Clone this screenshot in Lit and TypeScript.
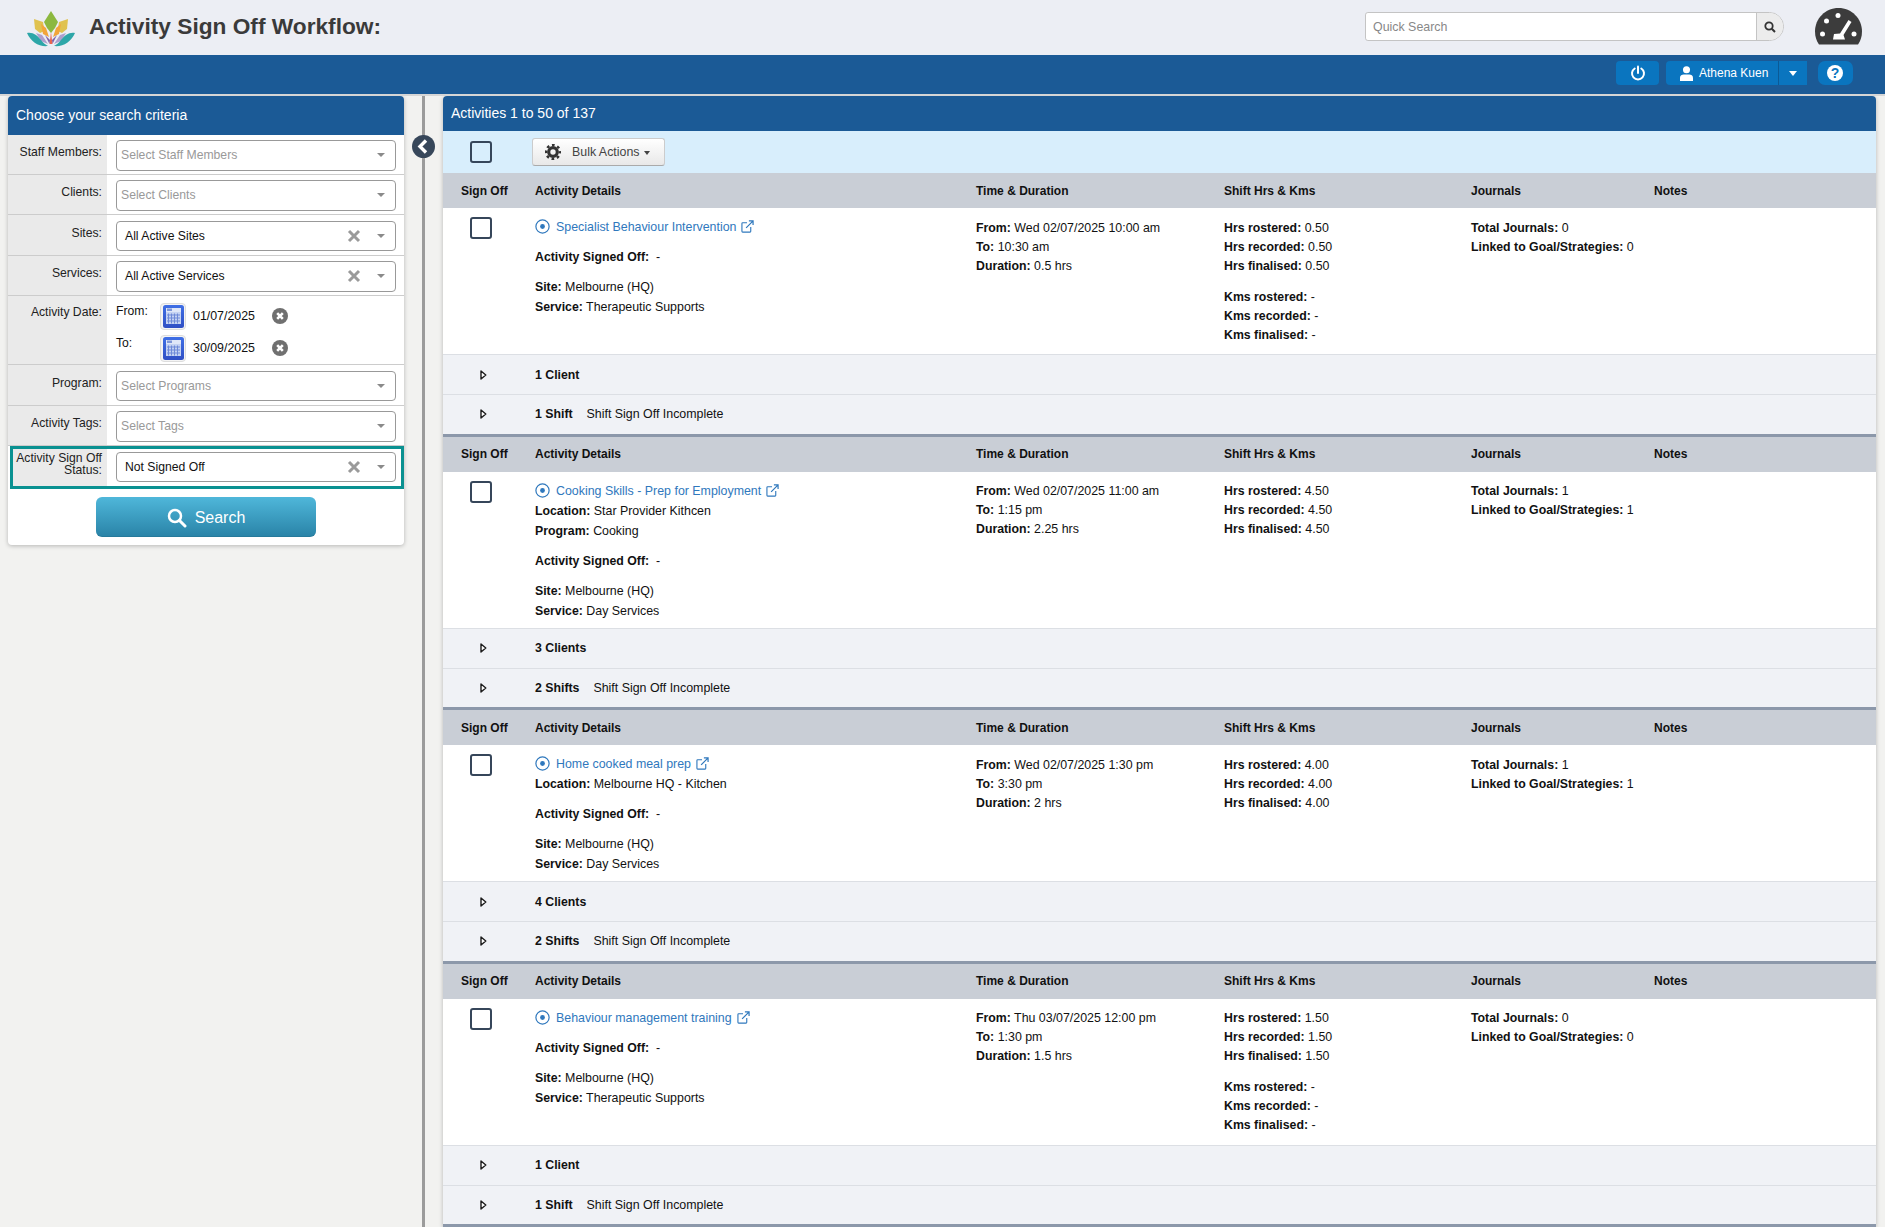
import { LitElement, html, css } from "lit";
import { customElement } from "lit/decorators.js";

const caret = html`<i class="caret"></i>`;
const cross = html`<svg class="x" viewBox="0 0 14 14"><path d="M2 2 12 12M12 2 2 12" stroke="#9a9a9a" stroke-width="3" fill="none"/></svg>`;

const calendar = html`<span class="cal"><svg viewBox="0 0 21 23" width="21" height="23">
  <defs><linearGradient id="cg" x1="0" y1="0" x2="0" y2="1"><stop offset="0" stop-color="#3f6fe6"/><stop offset="1" stop-color="#2f4fc4"/></linearGradient></defs>
  <rect x="0" y="0" width="21" height="23" rx="2.5" fill="url(#cg)"/>
  <rect x="3" y="3" width="15" height="16" fill="#c4d2f2"/>
  <rect x="3" y="3" width="15" height="4" fill="#dfe7f8"/>
  <path d="M4 3.5h5v2.5H4z" fill="#7f97d8"/>
  <path d="M5.5 8.5v10M8.5 8.5v10M11.5 8.5v10M14.5 8.5v10M4 10h13M4 13h13M4 16h13" stroke="#6f8ad8" stroke-width="1" fill="none"/>
</svg></span>`;

const clearBtn = html`<svg class="clr" viewBox="0 0 16 16"><circle cx="8" cy="8" r="8" fill="#707070"/><path d="M5.2 5.2 10.8 10.8M10.8 5.2 5.2 10.8" stroke="#fff" stroke-width="2.6" fill="none"/></svg>`;

const target = html`<svg class="tgt" viewBox="0 0 15 15"><circle cx="7.5" cy="7.5" r="6.6" fill="none" stroke="#2f78bd" stroke-width="1.2"/><circle cx="7.5" cy="7.5" r="2.4" fill="#2f78bd"/></svg>`;
const ext = html`<svg class="ext" viewBox="0 0 14 14"><path d="M10.5 7.5V12.2a.8.8 0 0 1-.8.8H1.8a.8.8 0 0 1-.8-.8V3.8a.8.8 0 0 1 .8-.8H6.5" fill="none" stroke="#2f78bd" stroke-width="1.2"/><path d="M5.5 8.5 12.5 1.5M8.5 1h4.5v4.5" fill="none" stroke="#2f78bd" stroke-width="1.3"/></svg>`;
const arrow = html`<svg class="arr" viewBox="0 0 7 10"><path d="M1 1 5.8 5 1 9Z" fill="#fff" stroke="#1c1c1c" stroke-width="1.4" stroke-linejoin="round"/></svg>`;

const logo = html`<svg class="logo" viewBox="0 0 48 36" width="48" height="36">
  <path d="M24 0 31 11 28 17 24 22 20 17 17 11Z" fill="#8cb83f"/>
  <path d="M7 8 16 11 17.5 20 13 22 8 18Z" fill="#e0c24f"/>
  <path d="M41 8 32 11 30.5 20 35 22 40 18Z" fill="#e0c24f"/>
  <path d="M14 13 19 17 22 26 16 23Z" fill="#f2a53a"/>
  <path d="M34 13 29 17 26 26 32 23Z" fill="#f2a53a"/>
  <path d="M9 22 15 24 21 33 14 30Z" fill="#ae9fcd"/>
  <path d="M39 22 33 24 27 33 34 30Z" fill="#ae9fcd"/>
  <path d="M18 24 23 29 22.5 33Z" fill="#7d62ab"/>
  <path d="M30 24 25 29 25.5 33Z" fill="#7d62ab"/>
  <path d="M24 21 25.4 33H22.6Z" fill="#e8654f"/>
  <path d="M0 22C6 21 10 24 14 29 16 32 19 34 21 35 12 36 4 31 0 22Z" fill="#2da6a8"/>
  <path d="M48 22C42 21 38 24 34 29 32 32 29 34 27 35 36 36 44 31 48 22Z" fill="#2da6a8"/>
</svg>`;

const gauge = html`<svg class="gauge" viewBox="0 0 47 37" width="47" height="37">
  <path d="M4 36.5C1.5 33 0 28.5 0 23.5 0 10.5 10.5 0 23.5 0S47 10.5 47 23.5C47 28.5 45.5 33 43 36.5Z" fill="#3c3c3c"/>
  <circle cx="7.5" cy="26" r="2.5" fill="#fff"/><circle cx="11.5" cy="13" r="2.5" fill="#fff"/>
  <circle cx="23" cy="7.5" r="2.5" fill="#fff"/><circle cx="39" cy="26" r="2.5" fill="#fff"/>
  <path d="M33.5 12 36.5 14 28.5 27 30 31.5H18L19 26 25 25.5Z" fill="#fff"/>
</svg>`;

const gear = html`<svg class="gear" viewBox="0 0 16 16" width="16" height="16"><circle cx="8" cy="8" r="4.3" fill="none" stroke="#333" stroke-width="3.2"/><circle cx="8" cy="8" r="7" fill="none" stroke="#333" stroke-width="2.4" stroke-dasharray="2.7 2.8" stroke-dashoffset="1.3"/></svg>`;

type Block = {
  title: string;
  extra?: [string, string][];
  from: string; to: string; dur: string;
  hrs: [string, string, string];
  showKms: boolean;
  journals: string; linked: string;
  service: string;
  clients: string; shifts: string;
};

const blocks: Block[] = [
  { title: "Specialist Behaviour Intervention", from: "Wed 02/07/2025 10:00 am", to: "10:30 am", dur: "0.5 hrs",
    hrs: ["0.50", "0.50", "0.50"], showKms: true, journals: "0", linked: "0", service: "Therapeutic Supports", clients: "1 Client", shifts: "1 Shift" },
  { title: "Cooking Skills - Prep for Employment", extra: [["Location:", "Star Provider Kithcen"], ["Program:", "Cooking"]],
    from: "Wed 02/07/2025 11:00 am", to: "1:15 pm", dur: "2.25 hrs", hrs: ["4.50", "4.50", "4.50"], showKms: false, journals: "1", linked: "1",
    service: "Day Services", clients: "3 Clients", shifts: "2 Shifts" },
  { title: "Home cooked meal prep", extra: [["Location:", "Melbourne HQ - Kitchen"]], from: "Wed 02/07/2025 1:30 pm", to: "3:30 pm", dur: "2 hrs",
    hrs: ["4.00", "4.00", "4.00"], showKms: false, journals: "1", linked: "1", service: "Day Services", clients: "4 Clients", shifts: "2 Shifts" },
  { title: "Behaviour management training", from: "Thu 03/07/2025 12:00 pm", to: "1:30 pm", dur: "1.5 hrs",
    hrs: ["1.50", "1.50", "1.50"], showKms: true, journals: "0", linked: "0", service: "Therapeutic Supports", clients: "1 Client", shifts: "1 Shift" },
];

@customElement("app-root")
export class AppRoot extends LitElement {
  static styles = css`
    :host { display: block; height: 1227px; overflow: hidden; background: #f2f2f0; font-family: "Liberation Sans", Arial, sans-serif; font-size: 12.4px; color: #111; }
    * { box-sizing: border-box; }
    b { font-size: 12.3px; font-weight: 700; }
    .top { height: 55px; background: #eceef4; display: flex; align-items: center; position: relative; }
    .logo { margin: 2px 0 0 27px; }
    h1 { margin: 0 0 2px 14px; font-size: 22.7px; font-weight: 700; color: #3a3a3a; flex: 1; }
    .qs { width: 419px; height: 29px; display: flex; background: #fff; border: 1px solid #c4c4c4; border-radius: 3px 15px 15px 3px; margin-top: -2px; }
    .qs span { flex: 1; color: #888; font-size: 12.4px; padding: 7px 0 0 7px; }
    .qs div { width: 27px; background: #ececec; border-left: 1px solid #c4c4c4; border-radius: 0 15px 15px 0; display: flex; align-items: center; justify-content: center; }
    .gauge { margin: -2px 23px 0 31px; }
    .bar { height: 39px; background: #1b5a96; display: flex; justify-content: flex-end; align-items: flex-start; padding: 6px 32px 0 0; }
    .btn { height: 24px; background: #0a75bf; border-radius: 4px; color: #fff; display: flex; align-items: center; justify-content: center; }
    .pw { width: 43px; margin-right: 7px; }
    .usr { width: 141px; margin-right: 11px; justify-content: flex-start; border-radius: 4px 0 0 4px; }
    .usr .nm { width: 113px; height: 24px; display: flex; align-items: center; padding-left: 14px; gap: 6px; border-right: 1px solid #0b5a96; font-size: 12px; }
    .usr .dd { flex: 1; display: flex; justify-content: center; }
    .usr .dd i { border: 4.5px solid transparent; border-top: 5px solid #fff; border-bottom: 0; }
    .hp { width: 35px; border-radius: 7px; padding-right: 1px; }
    .hp span { width: 16px; height: 16px; background: #fff; border-radius: 50%; color: #0a75bf; font-weight: 700; font-size: 14px; line-height: 16px; text-align: center; }
    .sep { height: 2px; background: #d6d6d6; }
    .main { height: 1131px; display: flex; align-items: flex-start; padding-left: 8px; overflow: hidden; }
    .side { width: 396px; flex: none; background: #fff; border-radius: 4px; box-shadow: 0 1px 4px rgba(0,0,0,.25); padding-bottom: 8px; }
    .phead { background: #1b5a96; color: #fff; font-size: 14px; border-radius: 4px 4px 0 0; }
    .side .phead { height: 39px; line-height: 39px; padding-left: 8px; }
    .fr { display: grid; grid-template-columns: 99px 1fr; height: 40px; border-bottom: 1px solid #ccc; font-size: 12.2px; }
    .fr.big { height: 41px; }
    .fr.big .lbl { padding-top: 11px; }
    .fr.big .sel { margin-top: 6px; height: 30px; }
    .lbl { background: #eaeaea; text-align: right; padding: 10px 5px 0 0; color: #222; }
    .sel { margin: 5px 8px 0 9px; height: 30.5px; border: 1px solid #999; border-radius: 4px; background: #fff; display: flex; align-items: center; padding: 0 8px 0 8px; color: #111; }
    .sel.ph { color: #999; padding-left: 4px; }
    .sel span { flex: 1; }
    .caret { width: 0; height: 0; border: 4.5px solid transparent; border-top: 4.5px solid #8a8a8a; border-bottom: 0; margin-right: 2px; }
    .x { width: 14px; height: 14px; margin-right: 16px; }
    .fr.date { height: 69px; }
    .fr.date .lbl { padding-top: 9px; }
    .dates { padding: 4px 0 0 9px; display: grid; grid-template-columns: 44px 26px 86px 16px; grid-auto-rows: 32px; align-items: center; }
    .dates .t { align-self: start; padding-top: 4px; }
    .cal { width: 26px; height: 27px; border: 1px solid #ddd; border-radius: 4px; background: #f4f4f4; display: flex; align-items: center; justify-content: center; }
    .dates .d { padding-left: 7px; font-size: 12.4px; margin-top: -1px; }
    .clr { width: 16px; height: 16px; }
    .fr.status { height: 43px; margin: 0 0 8px 2px; border: 3px solid #0a9191; grid-template-columns: 94px 1fr; }
    .fr.status .lbl { line-height: 12px; padding: 3px 5px 0 0; }
    .fr.status .sel { margin: 3px 5px 0 9px; height: 30px; }
    .sbtn { width: 220px; height: 40px; margin-left: 88px; border-radius: 6px; background: linear-gradient(#4fb7da, #2a84a8); color: #fff; font-size: 16px; display: flex; align-items: center; justify-content: center; gap: 8px; border-bottom: 1px solid #267a9b; padding-top: 2px; }
    .div { width: 3px; height: 100%; background: #9b9b9b; margin: 0 18px; flex: none; position: relative; }
    .col { position: absolute; top: 39px; left: -10px; width: 23px; height: 23px; }
    .res { width: 1433px; flex: none; background: #fff; border-radius: 4px 4px 0 0; box-shadow: 0 1px 4px rgba(0,0,0,.25); }
    .res .phead { height: 35px; line-height: 34px; padding-left: 8px; }
    .bulk { height: 42px; background: #d8eefc; display: flex; align-items: center; }
    .cb { display: block; width: 22px; height: 22px; border: 2.6px solid #36465a; border-radius: 3px; background: #fff; margin-left: 27px; }
    .bulk .cb { background: transparent; }
    .bb { margin-left: 40px; width: 133px; height: 28px; border: 1px solid #ccc; border-bottom-color: #aaa; border-radius: 3px; background: linear-gradient(#fff, #e8e8e8); display: flex; align-items: center; padding-left: 12px; color: #444; font-size: 12.4px; }
    .bb .gear { margin-right: 11px; }
    .bb i { border: 3.5px solid transparent; border-top: 4px solid #444; border-bottom: 0; margin-left: 4px; margin-top: 2px; }
    .grid { display: grid; grid-template-columns: 92px 441px 248px 247px 183px 1fr; }
    .head { height: 35px; background: #c9ced6; align-items: center; font-weight: 700; font-size: 12px; }
    .head > div:first-child { padding-left: 18px; }
    .body > div { padding-top: 10.5px; line-height: 19px; }
    .body > .cbc { padding-top: 9px; }
    .body > .det { padding: 9px 0 7px; line-height: 20px; }
    .body > .hrs { padding-bottom: 9.5px; }
    .link { color: #2f78bd; display: flex; align-items: center; }
    .tgt { width: 15px; height: 15px; margin-right: 6px; flex: none; margin-top: -1px; }
    .ext { width: 13px; height: 13px; margin-left: 5px; margin-top: -1px; }
    .gap { margin-top: 10px; }
    .gap2 { margin-top: 12px; }
    .sub { display: flex; align-items: center; background: #f0f2f6; border-top: 1px solid #dcdfe4; height: 40px; }
    .sub.s { height: 39.6px; }
    .sub .a { width: 92px; padding-left: 37px; display: flex; }
    .arr { width: 7px; height: 10px; }
    .sub b + span { margin-left: 14px; }
    .end { height: 3px; background: #8c98aa; }
  `;

  private row(f: any) {
    return html`<div class="fr ${f.cls ?? ""}"><div class="lbl">${f.l}</div>
      <div class="sel ${f.ph ? "ph" : ""}"><span>${f.v}</span>${f.ph ? "" : cross}${caret}</div></div>`;
  }

  private block(b: Block) {
    return html`
      <div class="grid head"><div>Sign Off</div><div>Activity Details</div><div>Time &amp; Duration</div><div>Shift Hrs &amp; Kms</div><div>Journals</div><div>Notes</div></div>
      <div class="grid body">
        <div class="cbc"><span class="cb"></span></div>
        <div class="det">
          <div class="link">${target}${b.title}${ext}</div>
          ${b.extra?.map(e => html`<div><b>${e[0]}</b> ${e[1]}</div>`)}
          <div class="gap"><b>Activity Signed Off:</b> &nbsp;-</div>
          <div class="gap"><b>Site:</b> Melbourne (HQ)</div>
          <div><b>Service:</b> ${b.service}</div>
        </div>
        <div><div><b>From:</b> ${b.from}</div><div><b>To:</b> ${b.to}</div><div><b>Duration:</b> ${b.dur}</div></div>
        <div class="hrs">
          <div><b>Hrs rostered:</b> ${b.hrs[0]}</div><div><b>Hrs recorded:</b> ${b.hrs[1]}</div><div><b>Hrs finalised:</b> ${b.hrs[2]}</div>
          ${b.showKms ? html`<div class="gap2"><b>Kms rostered:</b> -</div><div><b>Kms recorded:</b> -</div><div><b>Kms finalised:</b> -</div>` : ""}
        </div>
        <div><div><b>Total Journals:</b> ${b.journals}</div><div><b>Linked to Goal/Strategies:</b> ${b.linked}</div></div>
        <div></div>
      </div>
      <div class="sub"><div class="a">${arrow}</div><b>${b.clients}</b></div>
      <div class="sub s"><div class="a">${arrow}</div><b>${b.shifts}</b><span>Shift Sign Off Incomplete</span></div>
      <div class="end"></div>`;
  }

  render() {
    return html`
      <div class="top">
        ${logo}
        <h1>Activity Sign Off Workflow:</h1>
        <div class="qs"><span>Quick Search</span><div><svg viewBox="0 0 12 12" width="12" height="12"><circle cx="5" cy="5" r="3.7" fill="none" stroke="#333" stroke-width="1.8"/><path d="M7.8 7.8 11 11" stroke="#333" stroke-width="2"/></svg></div></div>
        ${gauge}
      </div>
      <div class="bar">
        <div class="btn pw"><svg viewBox="0 0 16 16" width="16" height="16"><path d="M4.7 3.5a6 6 0 1 0 6.6 0" fill="none" stroke="#fff" stroke-width="2" stroke-linecap="round"/><path d="M8 1.5V8" stroke="#fff" stroke-width="2" stroke-linecap="round"/></svg></div>
        <div class="btn usr"><div class="nm"><svg viewBox="0 0 14 16" width="13" height="15"><circle cx="7" cy="4" r="3.8" fill="#fff"/><path d="M0 16v-3.5C0 10 2 9 4 9h6c2 0 4 1 4 3.5V16Z" fill="#fff"/></svg>Athena Kuen</div><div class="dd"><i></i></div></div>
        <div class="btn hp"><span>?</span></div>
      </div>
      <div class="sep"></div>
      <div class="main">
        <div class="side">
          <div class="phead">Choose your search criteria</div>
          ${this.row({ l: "Staff Members:", v: "Select Staff Members", ph: 1 })}
          ${this.row({ l: "Clients:", v: "Select Clients", ph: 1 })}
          ${this.row({ l: "Sites:", v: "All Active Sites", cls: "big" })}
          ${this.row({ l: "Services:", v: "All Active Services" })}
          <div class="fr date"><div class="lbl">Activity Date:</div>
            <div class="dates">
              <span class="t">From:</span>${calendar}<span class="d">01/07/2025</span>${clearBtn}
              <span class="t">To:</span>${calendar}<span class="d">30/09/2025</span>${clearBtn}
            </div>
          </div>
          ${this.row({ l: "Program:", v: "Select Programs", ph: 1, cls: "big" })}
          ${this.row({ l: "Activity Tags:", v: "Select Tags", ph: 1 })}
          <div class="fr status"><div class="lbl">Activity Sign Off Status:</div>
            <div class="sel"><span>Not Signed Off</span>${cross}${caret}</div></div>
          <div class="sbtn"><svg viewBox="0 0 20 20" width="20" height="20"><circle cx="8" cy="8" r="6" fill="none" stroke="#fff" stroke-width="2.5"/><path d="M12.5 12.5 18 18" stroke="#fff" stroke-width="3" stroke-linecap="round"/></svg>Search</div>
        </div>
        <div class="div"><svg class="col" viewBox="0 0 23 23"><circle cx="11.5" cy="11.5" r="11.5" fill="#37475a"/><path d="M14 5.5 8 11.5 14 17.5" fill="none" stroke="#fff" stroke-width="3.4"/></svg></div>
        <div class="res">
          <div class="phead">Activities 1 to 50 of 137</div>
          <div class="bulk"><span class="cb"></span><div class="bb">${gear}Bulk Actions<i></i></div></div>
          ${blocks.map(b => this.block(b))}
        </div>
      </div>`;
  }
}
